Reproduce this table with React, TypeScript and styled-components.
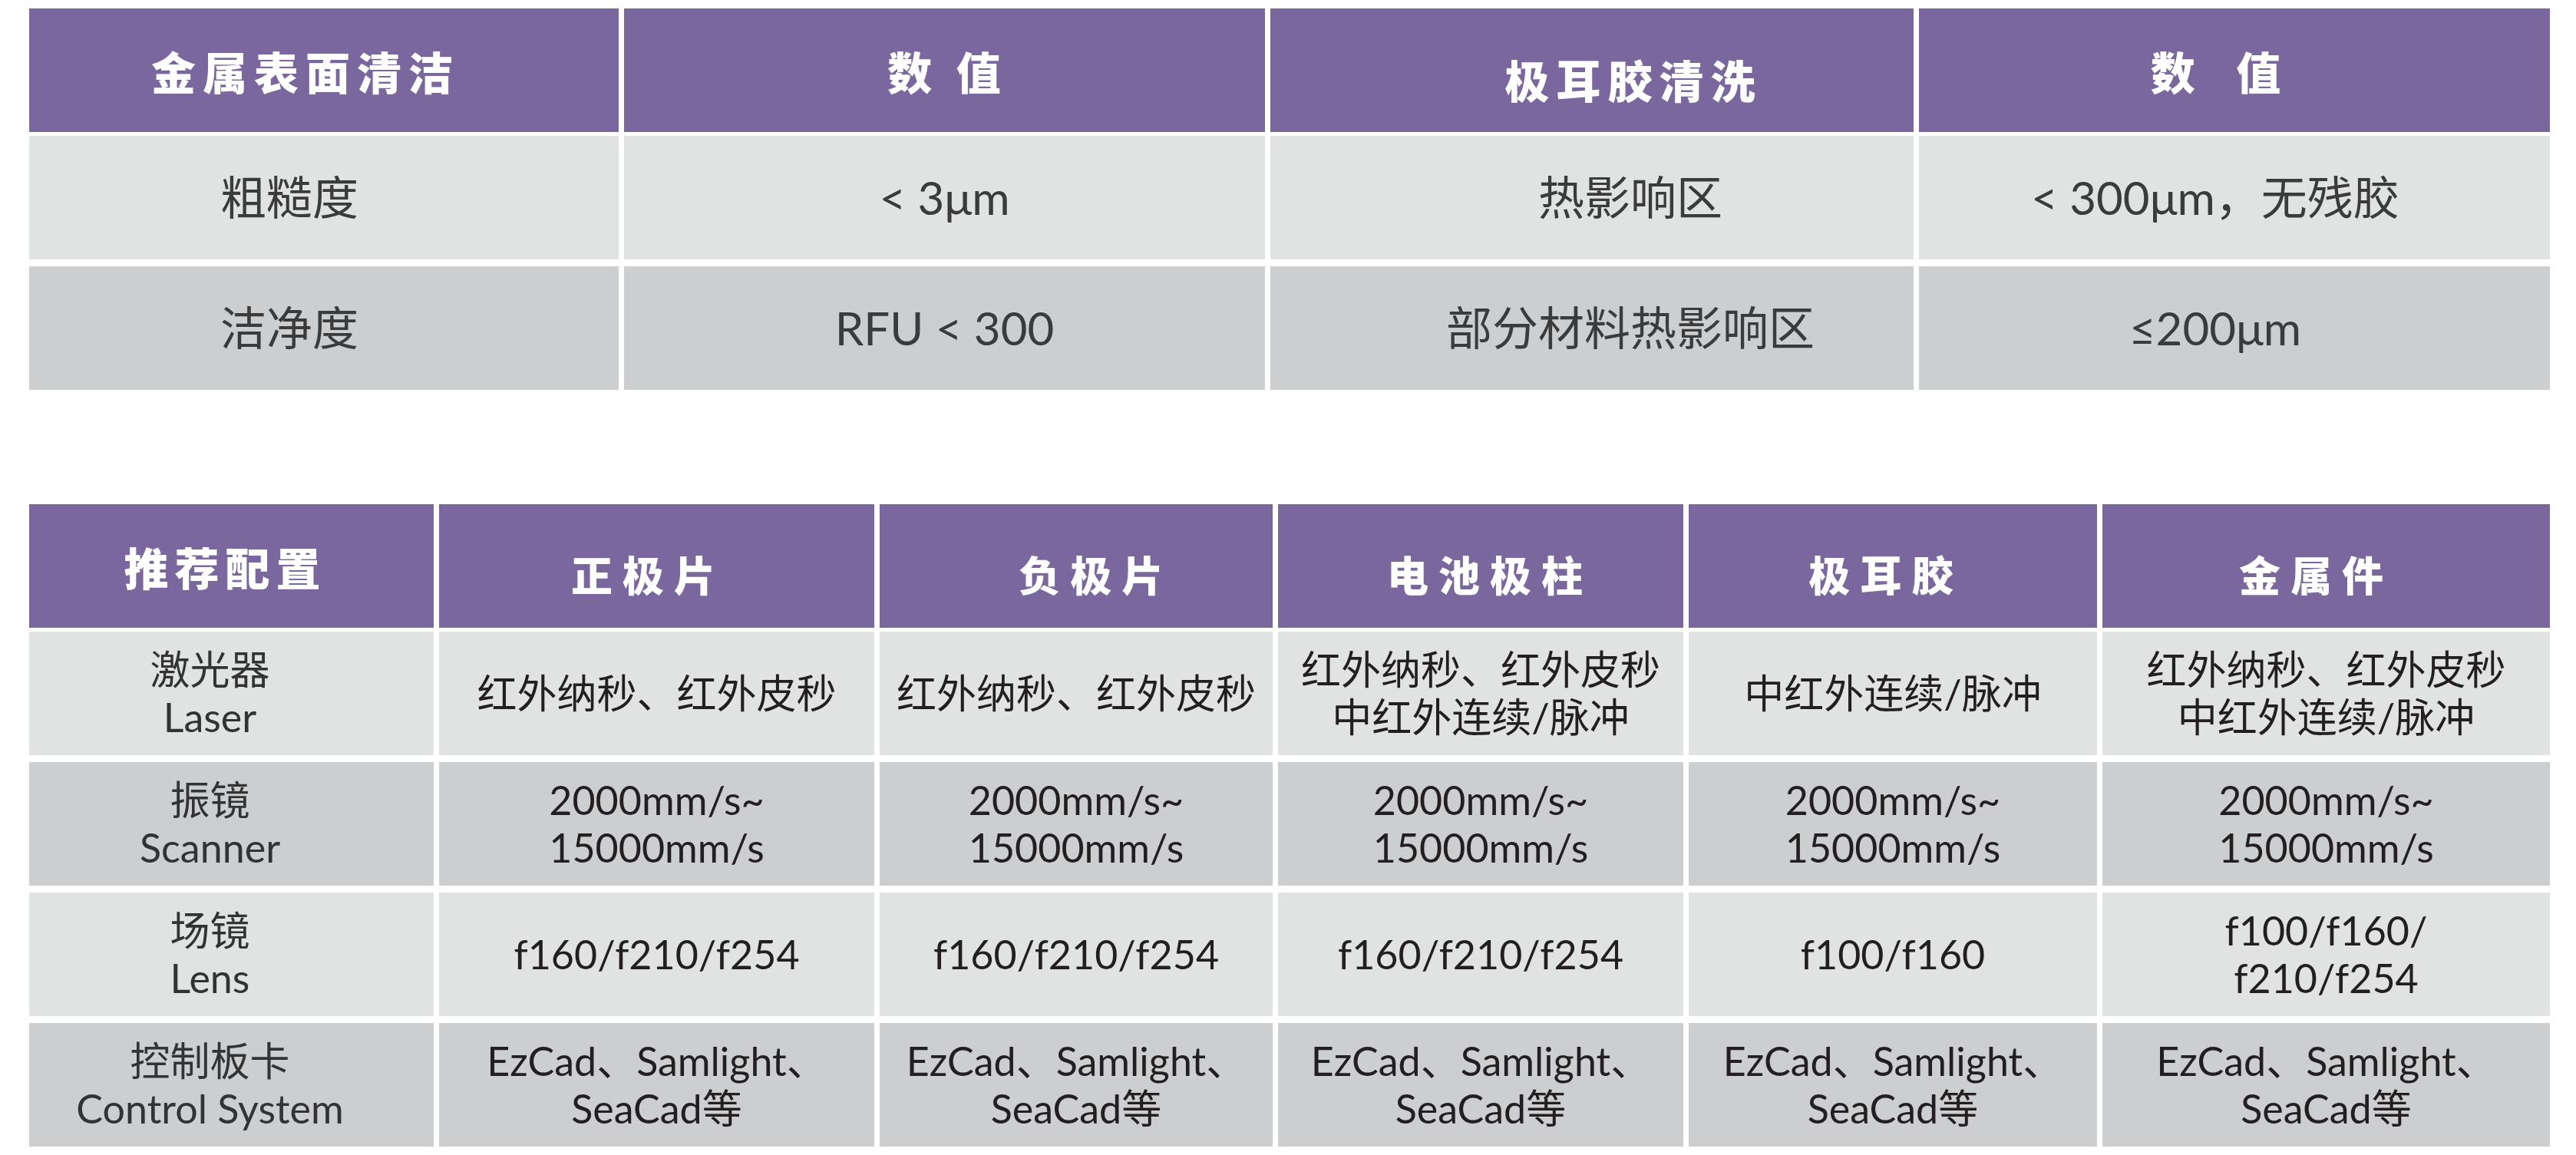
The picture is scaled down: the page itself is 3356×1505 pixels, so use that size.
import styled, { createGlobalStyle } from 'styled-components';

const GlobalStyle = createGlobalStyle`
  html, body {
    margin: 0;
    padding: 0;
    background: #ffffff;
  }
  body {
    font-family: Lato, "Noto Sans CJK SC", sans-serif;
  }
`;

type Tone = 'light' | 'dark';

const Page = styled.div`
  width: 3356px;
  height: 1505px;
  box-sizing: border-box;
  padding: 11px 34px 0 38px;
  display: flex;
  flex-direction: column;
  gap: 149px;
`;

const Table = styled.section`
  display: flex;
  flex-direction: column;
  gap: 5px;
`;

const Body = styled.div`
  display: flex;
  flex-direction: column;
  gap: 9px;
`;

const Row = styled.div<{ $cols: string }>`
  display: grid;
  grid-template-columns: ${(p) => p.$cols};
  column-gap: 7px;
  height: 161px;
`;

const Cell = styled.div<{ $dx?: number; $dy?: number }>`
  display: flex;
  align-items: center;
  justify-content: center;
  text-align: center;
  box-sizing: border-box;
  padding-top: ${(p) => Math.max(0, (p.$dy ?? 0) * 2)}px;
  padding-left: ${(p) => Math.max(0, (p.$dx ?? 0) * 2)}px;
  padding-right: ${(p) => Math.max(0, -(p.$dx ?? 0) * 2)}px;
`;

const HeadCell = styled(Cell)<{ $size: number; $spacing: number }>`
  background: #7a679d;
  color: #ffffff;
  font-family: "Noto Sans CJK SC", sans-serif;
  font-weight: 900;
  font-size: ${(p) => p.$size}px;
  letter-spacing: ${(p) => p.$spacing}px;
  white-space: pre;
`;

const DataCell = styled(Cell)<{ $tone: Tone; $size: number; $ink: string }>`
  background: ${(p) => (p.$tone === 'light' ? '#e1e2e2' : '#cdced0')};
  color: ${(p) => p.$ink};
  font-size: ${(p) => p.$size}px;
  line-height: 1.18;
  white-space: pre-line;
`;

const cleanCols = '768px 835px 838px 822px';
const cleanHead = [
  { text: '金属表面清洁', dx: -24, dy: 0 },
  { text: '数 值', dx: 4, dy: 0 },
  { text: '极耳胶清洗', dx: 54, dy: 11 },
  { text: '数  值', dx: -20, dy: 0 },
];
const cleanShift = [-45, 0, 50, -25];
const cleanRows: { tone: Tone; cells: string[] }[] = [
  { tone: 'light', cells: ['粗糙度', '< 3μm', '热影响区', '< 300μm，无残胶'] },
  { tone: 'dark', cells: ['洁净度', 'RFU < 300', '部分材料热影响区', '≤200μm'] },
];

const configCols = '527px 567px 512px 528px 532px 583px';
const configHead = [
  { text: '推荐配置', dx: -8 },
  { text: '正极片', dx: -11 },
  { text: '负极片', dx: 26 },
  { text: '电池极柱', dx: 12 },
  { text: '极耳胶', dx: -9 },
  { text: '金属件', dx: -13 },
];
const speed = '2000mm/s~\n15000mm/s';
const soft = 'EzCad、Samlight、\nSeaCad等';
const configRows: { tone: Tone; cells: string[] }[] = [
  {
    tone: 'light',
    cells: [
      '激光器\nLaser',
      '红外纳秒、红外皮秒',
      '红外纳秒、红外皮秒',
      '红外纳秒、红外皮秒\n中红外连续/脉冲',
      '中红外连续/脉冲',
      '红外纳秒、红外皮秒\n中红外连续/脉冲',
    ],
  },
  { tone: 'dark', cells: ['振镜\nScanner', speed, speed, speed, speed, speed] },
  {
    tone: 'light',
    cells: [
      '场镜\nLens',
      'f160/f210/f254',
      'f160/f210/f254',
      'f160/f210/f254',
      'f100/f160',
      'f100/f160/\nf210/f254',
    ],
  },
  { tone: 'dark', cells: ['控制板卡\nControl System', soft, soft, soft, soft, soft] },
];

const App = () => {
  return (
    <Page>
      <GlobalStyle />

      <Table>
        <Row $cols={cleanCols}>
          {cleanHead.map((h) => (
            <HeadCell key={h.text} $size={58} $spacing={9} $dx={h.dx} $dy={h.dy}>
              {h.text}
            </HeadCell>
          ))}
        </Row>
        <Body>
          {cleanRows.map((row, r) => (
            <Row key={r} $cols={cleanCols}>
              {row.cells.map((c, i) => (
                <DataCell key={i} $tone={row.tone} $size={60} $ink="#3b3b3b" $dx={cleanShift[i]}>
                  {c}
                </DataCell>
              ))}
            </Row>
          ))}
        </Body>
      </Table>

      <Table>
        <Row $cols={configCols}>
          {configHead.map((h, i) =>
            i === 0 ? (
              <HeadCell key={h.text} $size={58} $spacing={8} $dx={h.dx}>
                {h.text}
              </HeadCell>
            ) : (
              <HeadCell key={h.text} $size={54} $spacing={13} $dx={h.dx} $dy={10}>
                {h.text}
              </HeadCell>
            ),
          )}
        </Row>
        <Body>
          {configRows.map((row, r) => (
            <Row key={r} $cols={configCols}>
              {row.cells.map((c, i) => (
                <DataCell
                  key={i}
                  $tone={row.tone}
                  $size={52}
                  $ink={i === 0 ? '#333333' : '#231f20'}
                  $dx={i === 0 ? -28 : 0}
                >
                  {c}
                </DataCell>
              ))}
            </Row>
          ))}
        </Body>
      </Table>
    </Page>
  );
};

export default App;
